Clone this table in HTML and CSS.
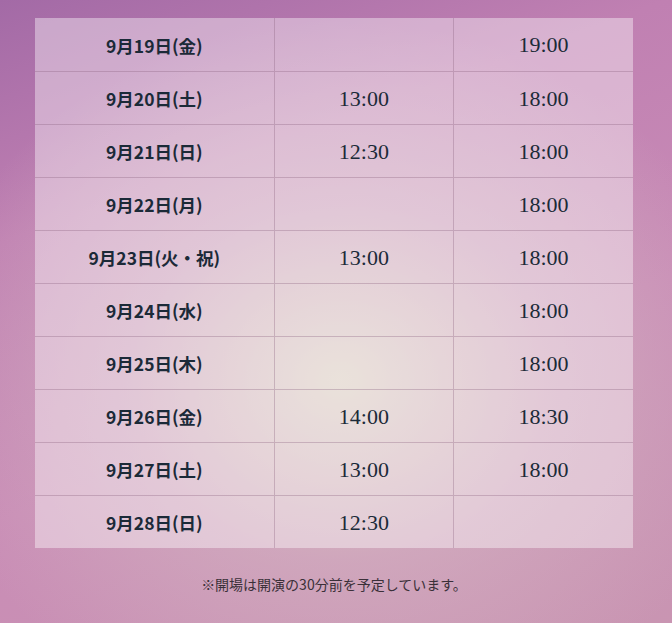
FILE: index.html
```html
<!DOCTYPE html>
<html lang="ja">
<head>
<meta charset="utf-8">
<title>公演スケジュール</title>
<link rel="stylesheet" href="styles.css">
</head>
<body>
<main class="page">
  <table class="schedule">
    <colgroup><col class="c-date"><col class="c-mat"><col class="c-eve"></colgroup>
    <tbody>
      <tr><th>9月19日(金)</th><td></td><td>19:00</td></tr>
      <tr><th>9月20日(土)</th><td>13:00</td><td>18:00</td></tr>
      <tr><th>9月21日(日)</th><td>12:30</td><td>18:00</td></tr>
      <tr><th>9月22日(月)</th><td></td><td>18:00</td></tr>
      <tr><th>9月23日(火・祝)</th><td>13:00</td><td>18:00</td></tr>
      <tr><th>9月24日(水)</th><td></td><td>18:00</td></tr>
      <tr><th>9月25日(木)</th><td></td><td>18:00</td></tr>
      <tr><th>9月26日(金)</th><td>14:00</td><td>18:30</td></tr>
      <tr><th>9月27日(土)</th><td>13:00</td><td>18:00</td></tr>
      <tr><th>9月28日(日)</th><td>12:30</td><td></td></tr>
    </tbody>
  </table>
  <p class="note">※開場は開演の30分前を予定しています。</p>
</main>
</body>
</html>
```
FILE: styles.css
```css
html, body {
  margin: 0;
  height: 100%;
}
body {
  background:
    radial-gradient(ellipse 420px 360px at 340px 380px, rgba(222, 214, 196, 0.9) 0%, rgba(214, 188, 196, 0.5) 50%, rgba(205, 160, 190, 0) 100%),
    linear-gradient(160deg, #a36aa6 0%, #c080b2 28%, #c98cb6 60%, #c995b2 100%);
  overflow: hidden;
}
.page {
  padding: 18px 0 0 35px;
}
.schedule {
  width: 598px;
  border-collapse: collapse;
  table-layout: fixed;
  background: rgba(255, 255, 255, 0.4);
  color: #1b2a38;
}
.c-date { width: 40%; }
.c-mat { width: 30%; }
.c-eve { width: 30%; }
.schedule th,
.schedule td {
  height: 53px;
  padding: 2px 0 0;
  text-align: center;
  vertical-align: middle;
  border-left: 1px solid rgba(140, 100, 130, 0.35);
  border-top: 1px solid rgba(140, 100, 130, 0.35);
  box-sizing: border-box;
}
.schedule tr:first-child th,
.schedule tr:first-child td { border-top: none; }
.schedule th { border-left: none; }
.schedule th {
  font-family: "Noto Sans CJK JP", "Noto Sans", sans-serif;
  font-weight: 700;
  font-size: 17.5px;
}
.schedule td {
  font-family: "Liberation Serif", "DejaVu Serif", serif;
  font-size: 22px;
  font-weight: 400;
}
.note {
  margin: 26px 0 0;
  width: 598px;
  text-align: center;
  font-family: "Noto Sans CJK JP", sans-serif;
  font-size: 14px;
  color: #3a3038;
}
```
